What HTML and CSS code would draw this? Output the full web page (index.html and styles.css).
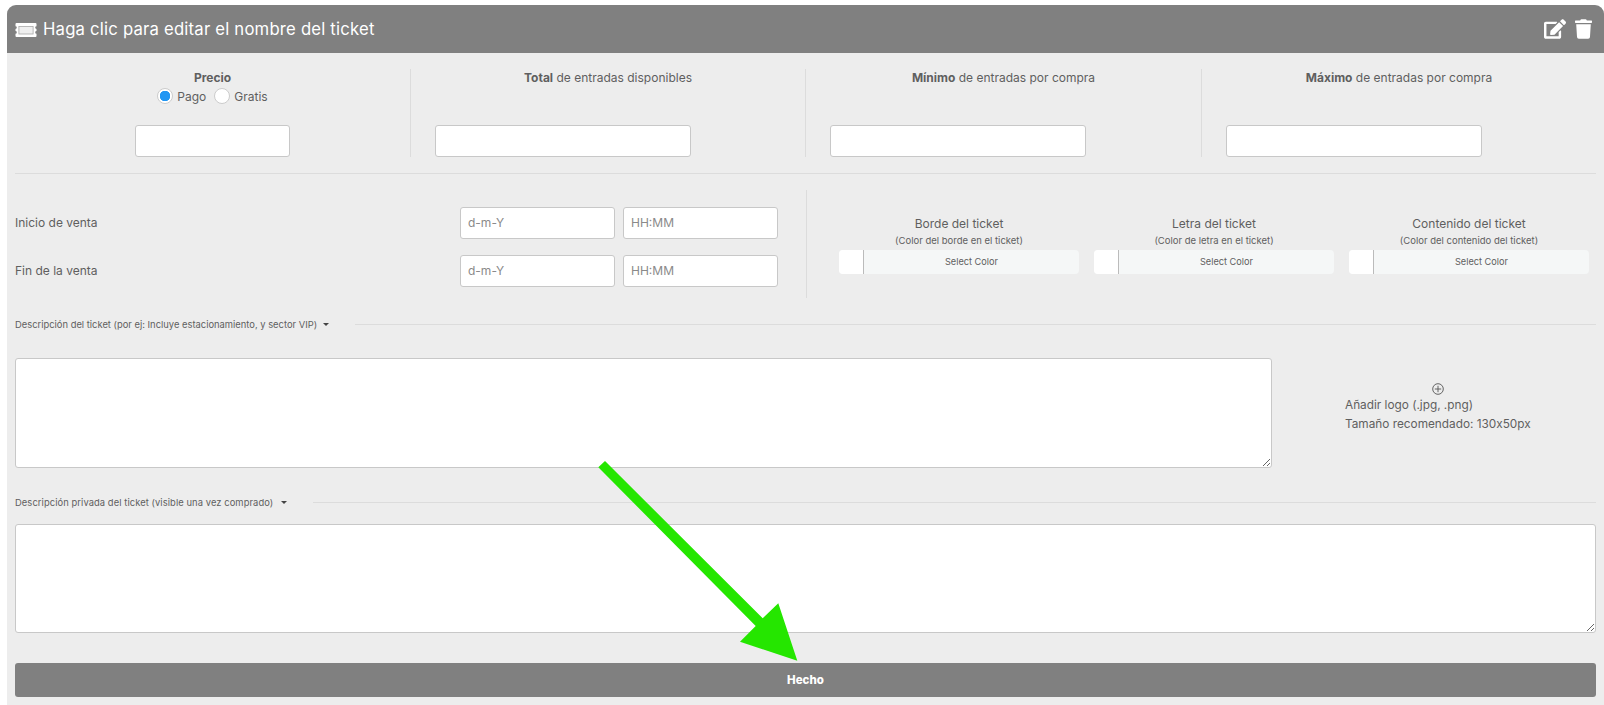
FILE: index.html
```html
<!DOCTYPE html>
<html lang="es">
<head>
<meta charset="utf-8">
<title>Ticket</title>
<link rel="stylesheet" href="styles.css">
</head>
<body>
<div class="card">
  <header class="card-head">
    <svg class="ico-ticket" viewBox="0 0 22 14"><path fill="#fff" d="M1.500 0h19a1 1 0 0 1 1 1v2.300a1.300 1.300 0 0 0 0 2.600v2.200a1.300 1.300 0 0 0 0 2.600V13a1 1 0 0 1-1 1h-19a1 1 0 0 1-1-1v-2.300a1.300 1.300 0 0 0 0-2.600V5.900a1.300 1.300 0 0 0 0-2.600V1a1 1 0 0 1 1-1z"/><rect x="3.900" y="3.500" width="14.200" height="7.500" fill="#efefef" stroke="#a8a8a8" stroke-width=".8"/></svg>
    <h1 class="card-title">Haga clic para editar el nombre del ticket</h1>
    <div class="head-actions">
      <svg class="ico-edit" viewBox="0 0 576 512"><path fill="#fff" d="M402.6 83.2l90.2 90.2c3.8 3.8 3.8 10 0 13.8L274.4 405.6l-92.8 10.3c-12.4 1.4-22.900-9.100-21.500-21.500l10.300-92.800L388.800 83.200c3.800-3.800 10-3.800 13.800 0zm162-22.900l-48.800-48.800c-15.200-15.200-39.900-15.200-55.200 0l-35.400 35.400c-3.800 3.800-3.800 10 0 13.800l90.200 90.200c3.800 3.800 10 3.800 13.800 0l35.400-35.400c15.200-15.300 15.200-40 0-55.200zM384 346.200V448H64V128h229.800c3.200 0 6.200-1.300 8.500-3.500l40-40c7.600-7.600 2.200-20.500-8.500-20.500H48C21.500 64 0 85.500 0 112v352c0 26.500 21.500 48 48 48h352c26.500 0 48-21.500 48-48V306.200c0-10.700-12.900-16-20.500-8.500l-40 40c-2.200 2.300-3.500 5.300-3.500 8.500z"/></svg>
      <svg class="ico-trash" viewBox="0 0 448 512"><path fill="#fff" d="M432 32H312l-9.400-18.700A24 24 0 0 0 281.100 0H166.800a23.720 23.720 0 0 0-21.400 13.300L136 32H16A16 16 0 0 0 0 48v32a16 16 0 0 0 16 16h416a16 16 0 0 0 16-16V48a16 16 0 0 0-16-16zM53.200 467a48 48 0 0 0 47.900 45h245.800a48 48 0 0 0 47.900-45L416 128H32z"/></svg>
    </div>
  </header>

  <div class="card-body">
    <section class="limits">
      <div class="limit limit-price">
        <div class="limit-label"><b>Precio</b></div>
        <div class="radios">
          <label class="radio"><input type="radio" name="price" checked><span>Pago</span></label>
          <label class="radio"><input type="radio" name="price"><span>Gratis</span></label>
        </div>
        <input class="field field-price" type="text">
      </div>
      <div class="limit">
        <div class="limit-label"><b>Total</b> de entradas disponibles</div>
        <input class="field field-wide" type="text">
      </div>
      <div class="limit">
        <div class="limit-label"><b>Mínimo</b> de entradas por compra</div>
        <input class="field field-wide" type="text">
      </div>
      <div class="limit limit-last">
        <div class="limit-label"><b>Máximo</b> de entradas por compra</div>
        <input class="field field-wide" type="text">
      </div>
    </section>

    <section class="schedule">
      <div class="dates">
        <div class="date-row">
          <span class="date-label">Inicio de venta</span>
          <input class="field field-date" type="text" placeholder="d-m-Y">
          <input class="field field-date" type="text" placeholder="HH:MM">
        </div>
        <div class="date-row">
          <span class="date-label">Fin de la venta</span>
          <input class="field field-date" type="text" placeholder="d-m-Y">
          <input class="field field-date" type="text" placeholder="HH:MM">
        </div>
      </div>
      <div class="colors">
        <div class="color">
          <div class="color-title">Borde del ticket</div>
          <div class="color-sub">(Color del borde en el ticket)</div>
          <div class="picker"><span class="swatch"></span><span class="picker-text">Select Color</span></div>
        </div>
        <div class="color">
          <div class="color-title">Letra del ticket</div>
          <div class="color-sub">(Color de letra en el ticket)</div>
          <div class="picker"><span class="swatch"></span><span class="picker-text">Select Color</span></div>
        </div>
        <div class="color">
          <div class="color-title">Contenido del ticket</div>
          <div class="color-sub">(Color del contenido del ticket)</div>
          <div class="picker"><span class="swatch"></span><span class="picker-text">Select Color</span></div>
        </div>
      </div>
    </section>

    <div class="sec-head sec-head-a">
      <span class="sec-label">Descripción del ticket (por ej: Incluye estacionamiento, y sector VIP)</span>
      <span class="caret"></span>
      <span class="sec-line"></span>
    </div>
    <section class="desc">
      <textarea class="area area-main"></textarea>
      <div class="logo">
        <div class="logo-plus">
          <svg class="ico-plus" viewBox="0 0 12 12"><circle cx="6" cy="6" r="5.300" fill="none" stroke="#555" stroke-width=".9"/><path d="M6 2.800v6.400M2.800 6h6.400" stroke="#555" stroke-width=".9"/></svg>
        </div>
        <div class="logo-line">Añadir logo (.jpg, .png)</div>
        <div class="logo-line logo-size">Tamaño recomendado: 130x50px</div>
      </div>
    </section>

    <div class="sec-head sec-head-b">
      <span class="sec-label">Descripción privada del ticket (visible una vez comprado)</span>
      <span class="caret"></span>
      <span class="sec-line"></span>
    </div>
    <textarea class="area area-private"></textarea>

    <button class="done" type="button">Hecho</button>
  </div>
</div>

<svg class="arrow" viewBox="0 0 1604 705"><polygon fill="#25e600" points="598.300,467.300 605,461 762.700,618.300 778.300,603.300 797.300,660.700 740,641.700 755.700,626"/></svg>
</body>
</html>
```
FILE: styles.css
```css
* { box-sizing: border-box; }
html, body { margin: 0; height: 705px; overflow: hidden; background: #fff; }
body {
  padding: 5px 0 0 7px;
  font-family: Inter, "Open Sans", sans-serif;
  font-feature-settings: "calt" 0;
  color: #5f5f5f;
  position: relative;
}
.card { height: 700px; background: #ededed; border-radius: 9px 9px 0 0; }
.card-head {
  height: 48px;
  background: #808080;
  border-radius: 9px 9px 0 0;
  display: flex;
  align-items: center;
  padding: 0 12px 0 8px;
  color: #fff;
}
.ico-ticket { width: 22px; height: 14px; margin-top: 1px; flex: none; }
.card-title { margin: 0 0 0 6px; font-size: 16.700px; font-weight: 400; letter-spacing: .2px; }
.head-actions { margin-left: auto; display: flex; align-items: center; gap: 9px; margin-top: -1px; }
.ico-edit { width: 22px; height: 20px; }
.ico-trash { width: 17px; height: 20px; }

.card-body { padding: 16px 8px 0; }

.limits {
  display: grid;
  grid-template-columns: 396px 395px 396px 1fr;
  height: 88px;
}
.limit {
  border-right: 1px solid #dcdcdc;
  display: flex;
  flex-direction: column;
  align-items: flex-start;
}
.limit-last { border-right: 0; }
.limit-price { align-items: center; }
.limit-label { width: 100%; text-align: center; font-size: 12px; line-height: 16px; padding-top: 1px; }
.limit-label b { font-weight: 700; }
.radios { display: flex; gap: 8px; margin-top: 1px; height: 18px; align-items: center; }
.radio { display: flex; align-items: center; gap: 4px; font-size: 12px; }
.radio input {
  appearance: none;
  margin: 0;
  width: 16px;
  height: 16px;
  border-radius: 50%;
  background: #fff;
  border: 1px solid #ccc;
}
.radio input:checked { background: radial-gradient(circle, #2196f3 0 5px, #fff 5.500px); }
.field {
  height: 32px;
  background: #fff;
  border: 1px solid #c8c8c8;
  border-radius: 3px;
  padding: 0 7px 2px;
  font-family: inherit;
  font-size: 12px;
  color: #555;
}
.field::placeholder { color: #8a8a8a; opacity: 1; }
.field-price { width: 155px; margin-top: auto; }
.field-wide { width: 256px; margin: auto 0 0 24px; }

.schedule {
  display: flex;
  margin-top: 16px;
  padding-top: 16px;
  height: 125px;
  border-top: 1px solid #dcdcdc;
}
.dates { width: 791px; flex: none; padding-top: 17px; height: 108px; display: flex; flex-direction: column; gap: 16px; }
.date-row { display: flex; align-items: center; gap: 8px; }
.date-label { width: 437px; font-size: 12px; padding-bottom: 2px; }
.field-date { width: 155px; }
.colors {
  flex: 1;
  height: 108px;
  border-left: 1px solid #dcdcdc;
  padding: 26px 0 0 32px;
  display: grid;
  grid-template-columns: repeat(3, 240px);
  column-gap: 15px;
  align-content: start;
}
.color { text-align: center; min-width: 0; }
.color-title { font-size: 12px; line-height: 16px; }
.color-sub { font-size: 9.500px; line-height: 14px; margin-top: 2px; white-space: nowrap; }
.picker {
  display: flex;
  height: 24px;
  margin-top: 2px;
  background: #f5f7f7;
  border-radius: 4px;
  overflow: hidden;
  align-items: stretch;
}
.swatch { width: 25px; background: #fff; border-right: 1px solid #bbb; flex: none; }
.picker-text { flex: 1; font-size: 9.200px; line-height: 24px; text-align: center; }

.sec-head { display: flex; align-items: center; height: 14px; }
.sec-head-a { margin-top: 19px; }
.sec-head-b { margin-top: 27px; }
.sec-label { font-size: 9.400px; color: #5f5f5f; white-space: nowrap; }
.sec-head-b .sec-label { letter-spacing: .07px; }
.caret {
  width: 0; height: 0;
  margin-left: 6px;
  border-left: 3px solid transparent;
  border-right: 3px solid transparent;
  border-top: 3px solid #444;
  flex: none;
}
.sec-head-b .caret { margin-left: 8px; }
.sec-line { flex: 1; margin-left: 26px; height: 1px; background: #dcdcdc; }

.desc { display: flex; margin-top: 27px; height: 110px; }
.area {
  display: block;
  background: #fff;
  border: 1px solid #c8c8c8;
  border-radius: 3px;
  margin: 0;
}
.area-main { width: 1257px; height: 110px; flex: none; }
.area-private { width: 100%; height: 109px; margin-top: 15px; }
.logo { margin-left: 73px; padding-top: 25px; font-size: 11.800px; width: 240px; }
.logo-plus { width: 186px; text-align: center; height: 14px; line-height: 0; }
.ico-plus { width: 12px; height: 12px; }
.logo-line { line-height: 16px; white-space: nowrap; }
.logo-size { margin-top: 3px; }

.done {
  display: block;
  width: 100%;
  height: 34px;
  margin-top: 30px;
  border: 0;
  border-radius: 3px;
  background: #808080;
  color: #fff;
  font-family: inherit;
  font-size: 11.500px;
  font-weight: 800;
}
.arrow { position: absolute; left: 0; top: 0; width: 1604px; height: 705px; pointer-events: none; }
```
